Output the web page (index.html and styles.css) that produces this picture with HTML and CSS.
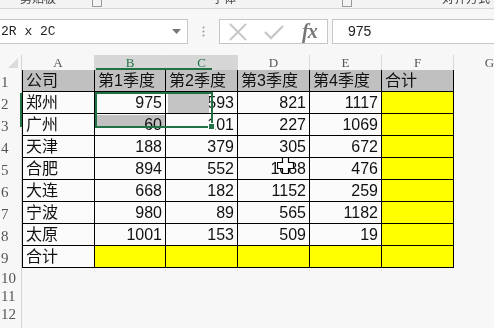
FILE: index.html
```html
<!DOCTYPE html>
<html lang="zh">
<head>
    <meta charset="UTF-8">
    <title>Sheet1</title>
    <link rel="stylesheet" href="styles.css">
</head>
<body>

<!-- bottom edge of the ribbon -->
<div class="ribbon">
    <span class="grp g1">剪贴板</span><span class="launch l1"></span>
    <span class="grp g2">字体</span><span class="launch l2"></span>
    <span class="grp g3">对齐方式</span>
</div>

<!-- formula bar -->
<div class="fbar">
    <div class="namebox">
        <span>2R x 2C</span>
        <svg width="9" height="5" viewBox="0 0 9 5"><path d="M0 0h9L4.5 5z" fill="#777"/></svg>
    </div>
    <div class="dots">
        <svg width="3" height="11" viewBox="0 0 3 11"><circle cx="1.5" cy="1.5" r="1" fill="#999"/><circle cx="1.5" cy="5.5" r="1" fill="#999"/><circle cx="1.5" cy="9.5" r="1" fill="#999"/></svg>
    </div>
    <div class="fbtns">
        <svg width="20" height="18" viewBox="0 0 20 18"><path d="M2 1l16 16M18 1L2 17" stroke="#c8c8c8" stroke-width="2"/></svg>
        <svg width="20" height="16" viewBox="0 0 20 16"><path d="M1 8l6 6L19 2" stroke="#c8c8c8" stroke-width="2.4" fill="none"/></svg>
        <span class="fx">fx</span>
    </div>
    <div class="finput">975</div>
</div>

<!-- worksheet -->
<div class="sheet">
    <div class="corner"><svg width="10" height="10" viewBox="0 0 10 10"><path d="M10 0v10H0z" fill="#dcdcdc"/></svg></div>
    <div class="ch">A</div>
    <div class="ch sel">B</div>
    <div class="ch sel">C</div>
    <div class="ch">D</div>
    <div class="ch">E</div>
    <div class="ch">F</div>
    <div class="ch">G</div>

    <div class="rh">1</div>
    <div class="c hd first">公司</div>
    <div class="c hd">第1季度</div>
    <div class="c hd">第2季度</div>
    <div class="c hd">第3季度</div>
    <div class="c hd">第4季度</div>
    <div class="c hd">合计</div>
    <div></div>

    <div class="rh">2</div>
    <div class="c first">郑州</div>
    <div class="c n">975</div>
    <div class="c n">593</div>
    <div class="c n">821</div>
    <div class="c n">1117</div>
    <div class="c y"></div>
    <div></div>

    <div class="rh">3</div>
    <div class="c first">广州</div>
    <div class="c n">60</div>
    <div class="c n">101</div>
    <div class="c n">227</div>
    <div class="c n">1069</div>
    <div class="c y"></div>
    <div></div>

    <div class="rh">4</div>
    <div class="c first">天津</div>
    <div class="c n">188</div>
    <div class="c n">379</div>
    <div class="c n">305</div>
    <div class="c n">672</div>
    <div class="c y"></div>
    <div></div>

    <div class="rh">5</div>
    <div class="c first">合肥</div>
    <div class="c n">894</div>
    <div class="c n">552</div>
    <div class="c n">1088</div>
    <div class="c n">476</div>
    <div class="c y"></div>
    <div></div>

    <div class="rh">6</div>
    <div class="c first">大连</div>
    <div class="c n">668</div>
    <div class="c n">182</div>
    <div class="c n">1152</div>
    <div class="c n">259</div>
    <div class="c y"></div>
    <div></div>

    <div class="rh">7</div>
    <div class="c first">宁波</div>
    <div class="c n">980</div>
    <div class="c n">89</div>
    <div class="c n">565</div>
    <div class="c n">1182</div>
    <div class="c y"></div>
    <div></div>

    <div class="rh">8</div>
    <div class="c first">太原</div>
    <div class="c n">1001</div>
    <div class="c n">153</div>
    <div class="c n">509</div>
    <div class="c n">19</div>
    <div class="c y"></div>
    <div></div>

    <div class="rh">9</div>
    <div class="c first">合计</div>
    <div class="c y"></div>
    <div class="c y"></div>
    <div class="c y"></div>
    <div class="c y"></div>
    <div class="c y"></div>
    <div></div>

    <div class="rh short">10</div><div></div><div></div><div></div><div></div><div></div><div></div><div></div>
    <div class="rh short">11</div><div></div><div></div><div></div><div></div><div></div><div></div><div></div>
    <div class="rh short">12</div><div></div><div></div><div></div><div></div><div></div><div></div><div></div>
    <div class="rh short"></div><div></div><div></div><div></div><div></div><div></div><div></div><div></div>

    <!-- drag animation: selection, highlight, cursor -->
    <div class="colmark"></div>
    <div class="rowmark"></div>
    <div class="shade shade-c2"></div>
    <div class="shade shade-b3"></div>
    <div class="selbox"></div>
    <div class="handle"></div>
    <svg class="cursor" width="17" height="17" viewBox="0 0 17 17"><path d="M5.5 0.5h6v5h5v6h-5v5h-6v-5h-5v-6h5z" fill="#fff" stroke="#000" stroke-width="1.2"/></svg>
</div>

</body>
</html>
```

FILE: styles.css
```css
body {
    margin: 0;
    background-color: #f7f7f7;
    font-family: "Liberation Sans", "Noto Sans CJK SC", sans-serif;
    overflow: hidden;
    width: 494px;
    height: 328px;
}

/* ribbon strip */
.ribbon {
    height: 8px;
    overflow: hidden;
    display: flex;
    align-items: flex-end;
    background-color: #f3f3f3;
    border-bottom: 1px solid #d6d6d6;
    color: #444;
    font-family: "Noto Sans CJK SC", sans-serif;
    font-size: 12px;
}
.grp {
    line-height: 12px;
    margin-bottom: 4px;
    white-space: nowrap;
}
.launch {
    width: 8px;
    height: 10px;
    border: 1px solid #999;
    margin-bottom: 1px;
}
.g1 { margin-left: 20px; }
.l1 { margin-left: 36px; }
.g2 { margin-left: 110px; }
.l2 { margin-left: 106px; }
.g3 { margin-left: 90px; }

/* formula bar */
.fbar {
    display: flex;
    height: 25px;
    margin-top: 10px;
}
.namebox {
    width: 188px;
    box-sizing: border-box;
    border: 1px solid #c6c6c6;
    border-left: none;
    background-color: #fff;
    display: flex;
    align-items: center;
    justify-content: space-between;
    padding: 0 6px 0 1px;
    font-family: "Liberation Mono", monospace;
    font-size: 13px;
    color: #222;
}
.dots {
    width: 31px;
    display: flex;
    align-items: center;
    justify-content: center;
}
.fbtns {
    width: 109px;
    box-sizing: border-box;
    border: 1px solid #c6c6c6;
    background-color: #fff;
    display: flex;
    align-items: center;
    gap: 16px;
    padding-left: 8px;
}
.fx {
    font-family: "Liberation Serif", serif;
    font-style: italic;
    font-weight: bold;
    font-size: 20px;
    color: #777;
    letter-spacing: -1px;
    margin-left: 2px;
}
.finput {
    flex: 1;
    margin-left: 4px;
    box-sizing: border-box;
    border: 1px solid #c6c6c6;
    border-right: none;
    background-color: #fff;
    padding-left: 15px;
    font-size: 14px;
    line-height: 23px;
    color: #222;
}

/* sheet grid */
.sheet {
    position: relative;
    margin-top: 11px;
    display: grid;
    grid-template-columns: 22px 73px 71px 72px 72px 72px 72px 72px;
    grid-template-rows: 15px repeat(9, 22px) repeat(4, 18px);
}
.corner {
    display: flex;
    align-items: flex-end;
    justify-content: flex-end;
    padding: 0 3px 2px 0;
    border-right: 1px solid #d4d4d4;
}
.ch {
    border-right: 1px solid #d8d8d8;
    text-align: center;
    font-family: "Liberation Serif", serif;
    font-size: 13px;
    line-height: 15px;
    color: #555;
}
.ch.sel {
    background-color: #d6d6d6;
    color: #217346;
}
.rh {
    border-right: 1px solid #d4d4d4;
    font-family: "Liberation Serif", serif;
    font-size: 15px;
    line-height: 25px;
    color: #555;
    padding-left: 1px;
    overflow: hidden;
}
.rh.short {
    line-height: 21px;
}

/* data cells */
.c {
    box-sizing: border-box;
    border-right: 1px solid #000;
    border-bottom: 1px solid #000;
    background-color: #fbfbfb;
    font-size: 16px;
    line-height: 22px;
    padding: 0 3px;
    color: #111;
    white-space: nowrap;
    overflow: hidden;
}
.c.first {
    border-left: 1px solid #000;
}
.c.hd {
    background-color: #c0c0c0;
}
.c.n {
    text-align: right;
}
.c.y {
    background-color: #ffff00;
}

/* overlays from the drag */
.colmark {
    position: absolute;
    left: 96px;
    top: 13px;
    width: 116px;
    height: 2px;
    background-color: #217346;
}
.rowmark {
    position: absolute;
    left: 20px;
    top: 38px;
    width: 2px;
    height: 34px;
    background-color: #217346;
}
.shade {
    position: absolute;
    background-color: #c4c4c4;
}
.shade-c2 {
    left: 168px;
    top: 38px;
    width: 41px;
    height: 20px;
}
.shade-b3 {
    left: 97px;
    top: 60px;
    width: 69px;
    height: 11px;
    mix-blend-mode: multiply;
}
.selbox {
    position: absolute;
    left: 95px;
    top: 37px;
    width: 114px;
    height: 32px;
    border: 2px solid #217346;
}
.handle {
    position: absolute;
    left: 208px;
    top: 68px;
    width: 5px;
    height: 5px;
    background-color: #217346;
    border: 1px solid #fff;
}
.cursor {
    position: absolute;
    left: 277px;
    top: 102px;
}
```
